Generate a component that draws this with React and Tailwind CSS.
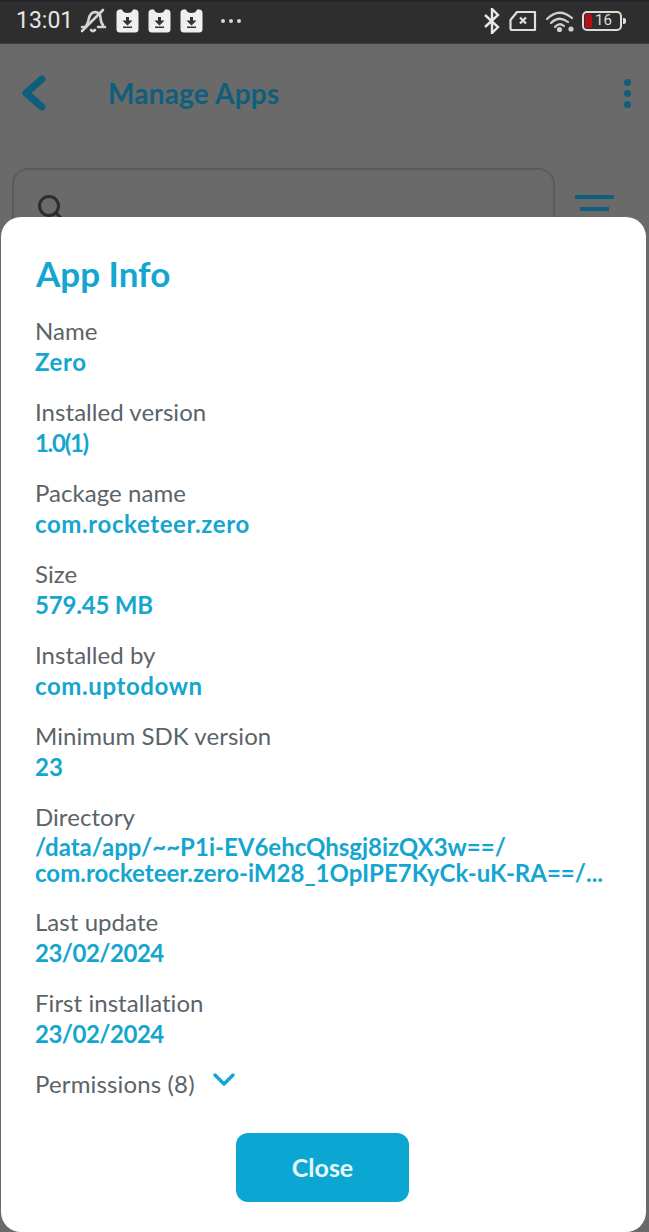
import React from "react";

const F = "[font-family:Lato,'Open_Sans',sans-serif]";

function Field({ label, children, value = "tracking-[0.6px]" }) {
  return (
    <div className="mb-[23px]">
      <div className="text-[24px] leading-[27px] tracking-[0.05px] text-[#5a6468]">{label}</div>
      <div className={`mt-[4px] text-[24px] leading-[27px] font-bold text-[#14a6cf] ${value}`}>{children}</div>
    </div>
  );
}

function BagIcon() {
  return (
    <svg width="23" height="24" viewBox="0 0 23 24">
      <path d="M0.500 4Q0.500 0.500 4 0.500H6Q7 4 11.500 4T17 0.500H19Q22.500 0.500 22.500 4V20Q22.500 23.500 19 23.500H4Q0.500 23.500 0.500 20Z" fill="#efefef" />
      <path d="M10 8h3v3.500h3.500l-5 5-5-5H10zM7 17.500h9V19H7z" fill="#333" />
    </svg>
  );
}

export default function App() {
  return (
    <div className={`relative h-[1232px] w-[649px] overflow-hidden bg-[#6a6a6a] ${F}`}>
      <div className="flex h-[44px] items-center justify-between border-t-[2px] border-b border-[#23232b] border-b-[#3c3c3c] bg-[#2e2e2e] pb-[4px] pl-[16px] pr-[27px]">
        <div className="flex items-center">
          <span className="w-[62px] font-['Roboto',sans-serif] text-[23px] leading-none text-[#e6e6e6]">13:01</span>
          <svg width="32" height="30" viewBox="0 0 32 30" className="ml-[-1px]" fill="none" stroke="#d4d4d4" strokeWidth="2.600" strokeLinecap="round">
            <path d="M9 20c3-3 2-9 5-12s8-2 9 1c1 3 0 7 3 10" />
            <path d="M5 21h4M21 21h7M14 24q2 2 4 0" />
            <path d="M5 25L26 4" />
          </svg>
          <div className="ml-[7px] flex gap-[9px]"><BagIcon /><BagIcon /><BagIcon /></div>
          <div className="ml-[18px] flex gap-[4px]">
            <span className="size-[4px] rounded-full bg-[#d8d8d8]" />
            <span className="size-[4px] rounded-full bg-[#d8d8d8]" />
            <span className="size-[4px] rounded-full bg-[#d8d8d8]" />
          </div>
        </div>
        <div className="flex items-center">
          <svg width="18" height="26" viewBox="0 0 18 26" fill="none" stroke="#e8e8e8" strokeWidth="2.400">
            <path d="M2 7l13 12-6 6V1l6 6L2 19" />
          </svg>
          <svg width="28" height="22" viewBox="0 0 28 22" className="ml-[8px]" fill="none" stroke="#dedede" strokeWidth="2.200">
            <path d="M8 2H26V20H3Q1.500 20 1.500 18V10Z" strokeLinejoin="round" />
            <path d="M11 7.500l6 6M17 7.500l-6 6" />
          </svg>
          <svg width="30" height="24" viewBox="0 0 30 24" className="ml-[8px]" fill="none" stroke="#cfcfcf" strokeWidth="2.200" strokeLinecap="round">
            <path d="M2 10Q14-2 27 9" />
            <path d="M6 14Q14 6 23 13" />
            <path d="M10 18Q14 13 19 17" />
            <circle cx="14.500" cy="20.500" r="1.500" fill="#cfcfcf" />
            <circle cx="26" cy="20" r="1.500" fill="#e8e8e8" />
          </svg>
          <div className="relative ml-[7px] flex h-[20px] w-[40px] items-center rounded-[5px] border-[2px] border-[#dcdcdc]">
            <span className="ml-[1px] h-[14px] w-[7px] rounded-[2px] bg-[#b5101a]" />
            <span className="ml-[3px] font-['Roboto',sans-serif] text-[15px] leading-none text-[#dcdcdc]">16</span>
            <span className="absolute right-[-6px] h-[6px] w-[3px] rounded-r-[2px] bg-[#dcdcdc]" />
          </div>
        </div>
      </div>

      <div className="flex h-[98px] items-center justify-between pl-[21px] pr-[18px]">
        <div className="flex items-center">
          <svg width="26" height="36" viewBox="0 0 26 36" fill="none" stroke="#0d5f7c" strokeWidth="7" strokeLinecap="round" strokeLinejoin="round">
            <path d="M21 4L5 18l16 14" />
          </svg>
          <span className="ml-[61px] text-[28px] font-bold leading-none tracking-[0.2px] text-[#0d5f7c]">Manage Apps</span>
        </div>
        <div className="flex flex-col gap-[4px]">
          <span className="size-[7px] rounded-full bg-[#0d5f7c]" />
          <span className="size-[7px] rounded-full bg-[#0d5f7c]" />
          <span className="size-[7px] rounded-full bg-[#0d5f7c]" />
        </div>
      </div>

      <div className="mt-[26px] flex items-start pl-[12px]">
        <div className="h-[90px] w-[543px] rounded-[16px] border-[2px] border-[#5b5b5b] pl-[23px] pt-[24px]">
          <svg width="26" height="26" viewBox="0 0 26 26" fill="none" stroke="#2c2c2c" strokeWidth="3">
            <circle cx="12" cy="12" r="9.500" />
            <path d="M19 19l5 5" />
          </svg>
        </div>
        <div className="ml-[20px] mt-[27px] flex flex-col items-center gap-[8px]">
          <span className="h-[4px] w-[39px] bg-[#0d5f7c]" />
          <span className="h-[4px] w-[29px] bg-[#0d5f7c]" />
        </div>
      </div>

      <div className="absolute left-[1px] top-[217px] h-[1015px] w-[645px] rounded-[20px] bg-white pl-[34px] pr-[36px] pt-[34px]">
        <h1 className="mb-[22px] ml-[1px] text-[35px] font-bold leading-[44px] text-[#14a6cf]">App Info</h1>
        <Field label="Name">Zero</Field>
        <Field label="Installed version" value="tracking-[-1.300px]">1.0(1)</Field>
        <Field label="Package name">com.rocketeer.zero</Field>
        <Field label="Size" value="tracking-[-0.2px]">579.45 MB</Field>
        <Field label="Installed by">com.uptodown</Field>
        <Field label="Minimum SDK version" value="tracking-[0px]">23</Field>
        <div className="mb-[22px]">
          <div className="text-[24px] leading-[27px] tracking-[0.05px] text-[#5a6468]">Directory</div>
          <div className="mt-[4px] text-[24px] font-bold leading-[26px] text-[#14a6cf]">
            <div>/data/app/~~P1i-EV6ehcQhsgj8izQX3w==/</div>
            <div className="whitespace-nowrap">com.rocketeer.zero-iM28_1OpIPE7KyCk-uK-RA==/...</div>
          </div>
        </div>
        <Field label="Last update" value="tracking-[-0.5px]">23/02/2024</Field>
        <Field label="First installation" value="tracking-[-0.5px]">23/02/2024</Field>
        <div className="flex items-center text-[24px] leading-[27px] tracking-[0.15px] text-[#5a6468]">
          <span>Permissions (8)</span>
          <svg width="24" height="16" viewBox="0 0 24 16" className="ml-[17px] mt-[-7px]" fill="none" stroke="#14a6cf" strokeWidth="3.500" strokeLinecap="round" strokeLinejoin="round">
            <path d="M3 3l9 9 9-9" />
          </svg>
        </div>
        <div className="mt-[36px] flex justify-center">
          <button className="h-[69px] w-[173px] rounded-[12px] bg-[#0ca6d2] text-[25px] font-bold text-[#e6f7fc]">Close</button>
        </div>
      </div>
    </div>
  );
}
